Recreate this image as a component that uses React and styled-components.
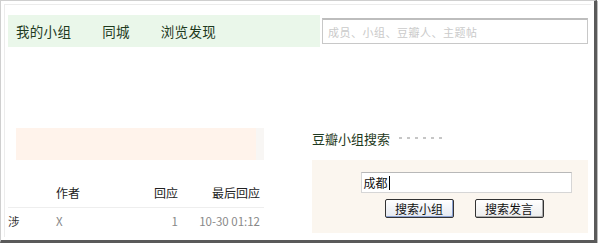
import React from 'react';
import styled, { createGlobalStyle } from 'styled-components';

const Global = createGlobalStyle`
  html, body {
    margin: 0;
    padding: 0;
    background: #fff;
    font-family: "Noto Sans CJK SC", "Liberation Sans", sans-serif;
  }
`;

const Frame = styled.div`
  width: 587px;
  height: 233px;
  border-top: 1px solid #cfcfcf;
  border-left: 1px solid #cfcfcf;
  border-right: 3px solid #5a5a5a;
  border-bottom: 3px solid #5a5a5a;
  box-shadow: 1px 1px 0 #bbb;
  padding: 3px;
  overflow: hidden;
`;

const Inner = styled.div`
  height: 100%;
  border-top: 1px solid #ececec;
  border-left: 1px solid #ececec;
  padding: 10px 0 0 3px;
  box-sizing: border-box;
`;

const TopBar = styled.div`
  display: flex;
  align-items: center;
  height: 32px;
`;

const Nav = styled.div`
  display: flex;
  align-items: center;
  gap: 31px;
  width: 304px;
  height: 32px;
  padding-left: 8px;
  background: #eaf7ea;
`;

const NavLink = styled.span`
  font-size: 13.5px;
  color: #1e3a1e;
  letter-spacing: 0.3px;
`;

const TopSearch = styled.div`
  margin-left: 2px;
  width: 266px;
  height: 26px;
  border: 1px solid #c8c8c8;
  border-top: 2px solid #bdbdbd;
  display: flex;
  align-items: center;
  padding-left: 5px;
  box-sizing: border-box;
  background: #fff;
`;

const Placeholder = styled.span`
  font-size: 11px;
  color: #cacaca;
  letter-spacing: 0.5px;
`;

const Lower = styled.div`
  display: flex;
  margin-top: 81px;
`;

const LeftCol = styled.div`
  width: 256px;
`;

const Band = styled.div`
  height: 32px;
  margin-left: 8px;
  width: 240px;
  background: #fff3eb;
  border-right: 8px solid #f8f6f4;
`;

const columns = '48px 76px 46px 82px';

const HeadRow = styled.div`
  display: grid;
  grid-template-columns: ${columns};
  margin-top: 18px;
  height: 29px;
  align-items: center;
  border-bottom: 1px solid #eee;
`;

const HeadCell = styled.span`
  font-size: 12px;
  color: #222;
  text-align: ${(p) => p.align || 'left'};
`;

const DataRow = styled.div`
  display: grid;
  grid-template-columns: ${columns};
  height: 26px;
  align-items: center;
`;

const Cell = styled.span`
  font-size: 11.5px;
  color: ${(p) => p.color || '#888'};
  text-align: ${(p) => p.align || 'left'};
  white-space: nowrap;
`;

const RightCol = styled.div`
  margin-left: 48px;
  width: 276px;
`;

const Heading = styled.div`
  display: flex;
  align-items: center;
  height: 20px;
`;

const HeadingText = styled.span`
  font-size: 13px;
  color: #1f3a22;
`;

const Dots = styled.span`
  margin-left: 9px;
  width: 44px;
  height: 2px;
  background: repeating-linear-gradient(to right, #c6c6c6 0 3px, transparent 3px 8px);
`;

const Panel = styled.div`
  margin-top: 12px;
  height: 73px;
  background: #fbf6ef;
  display: flex;
  flex-direction: column;
  align-items: center;
  padding-top: 12px;
  box-sizing: border-box;
`;

const Input = styled.div`
  width: 211px;
  height: 21px;
  margin-left: 32px;
  background: #fff;
  border: 1px solid #d6d6d6;
  border-top-color: #b8b8b8;
  box-sizing: border-box;
  display: flex;
  align-items: center;
  padding-left: 2px;
  font-size: 12px;
  color: #111;
`;

const Caret = styled.span`
  display: inline-block;
  width: 1px;
  height: 14px;
  background: #000;
  margin-left: 1px;
`;

const Buttons = styled.div`
  display: flex;
  gap: 21px;
  margin-top: 6px;
  margin-left: 28px;
`;

const Button = styled.button`
  width: 69px;
  height: 19px;
  padding: 0;
  font-family: inherit;
  font-size: 12px;
  color: #111;
  background: ${(p) => (p.primary ? 'linear-gradient(#fff, #e4e8f0)' : 'linear-gradient(#fff, #ececec)')};
  border: 1px solid #333;
  border-radius: 2px;
  box-shadow: inset -1px -1px 0 ${(p) => (p.primary ? '#8aa0d0' : '#aaa')};
  line-height: 17px;
`;

export default function App() {
  return (
    <>
      <Global />
      <Frame>
        <Inner>
          <TopBar>
            <Nav>
              <NavLink>我的小组</NavLink>
              <NavLink>同城</NavLink>
              <NavLink>浏览发现</NavLink>
            </Nav>
            <TopSearch>
              <Placeholder>成员、小组、豆瓣人、主题帖</Placeholder>
            </TopSearch>
          </TopBar>
          <Lower>
            <LeftCol>
              <Band />
              <HeadRow>
                <span />
                <HeadCell>作者</HeadCell>
                <HeadCell align="right">回应</HeadCell>
                <HeadCell align="right">最后回应</HeadCell>
              </HeadRow>
              <DataRow>
                <Cell color="#333">涉</Cell>
                <Cell>X</Cell>
                <Cell align="right">1</Cell>
                <Cell align="right">10-30 01:12</Cell>
              </DataRow>
            </LeftCol>
            <RightCol>
              <Heading>
                <HeadingText>豆瓣小组搜索</HeadingText>
                <Dots />
              </Heading>
              <Panel>
                <Input>
                  成都
                  <Caret />
                </Input>
                <Buttons>
                  <Button primary>搜索小组</Button>
                  <Button>搜索发言</Button>
                </Buttons>
              </Panel>
            </RightCol>
          </Lower>
        </Inner>
      </Frame>
    </>
  );
}
